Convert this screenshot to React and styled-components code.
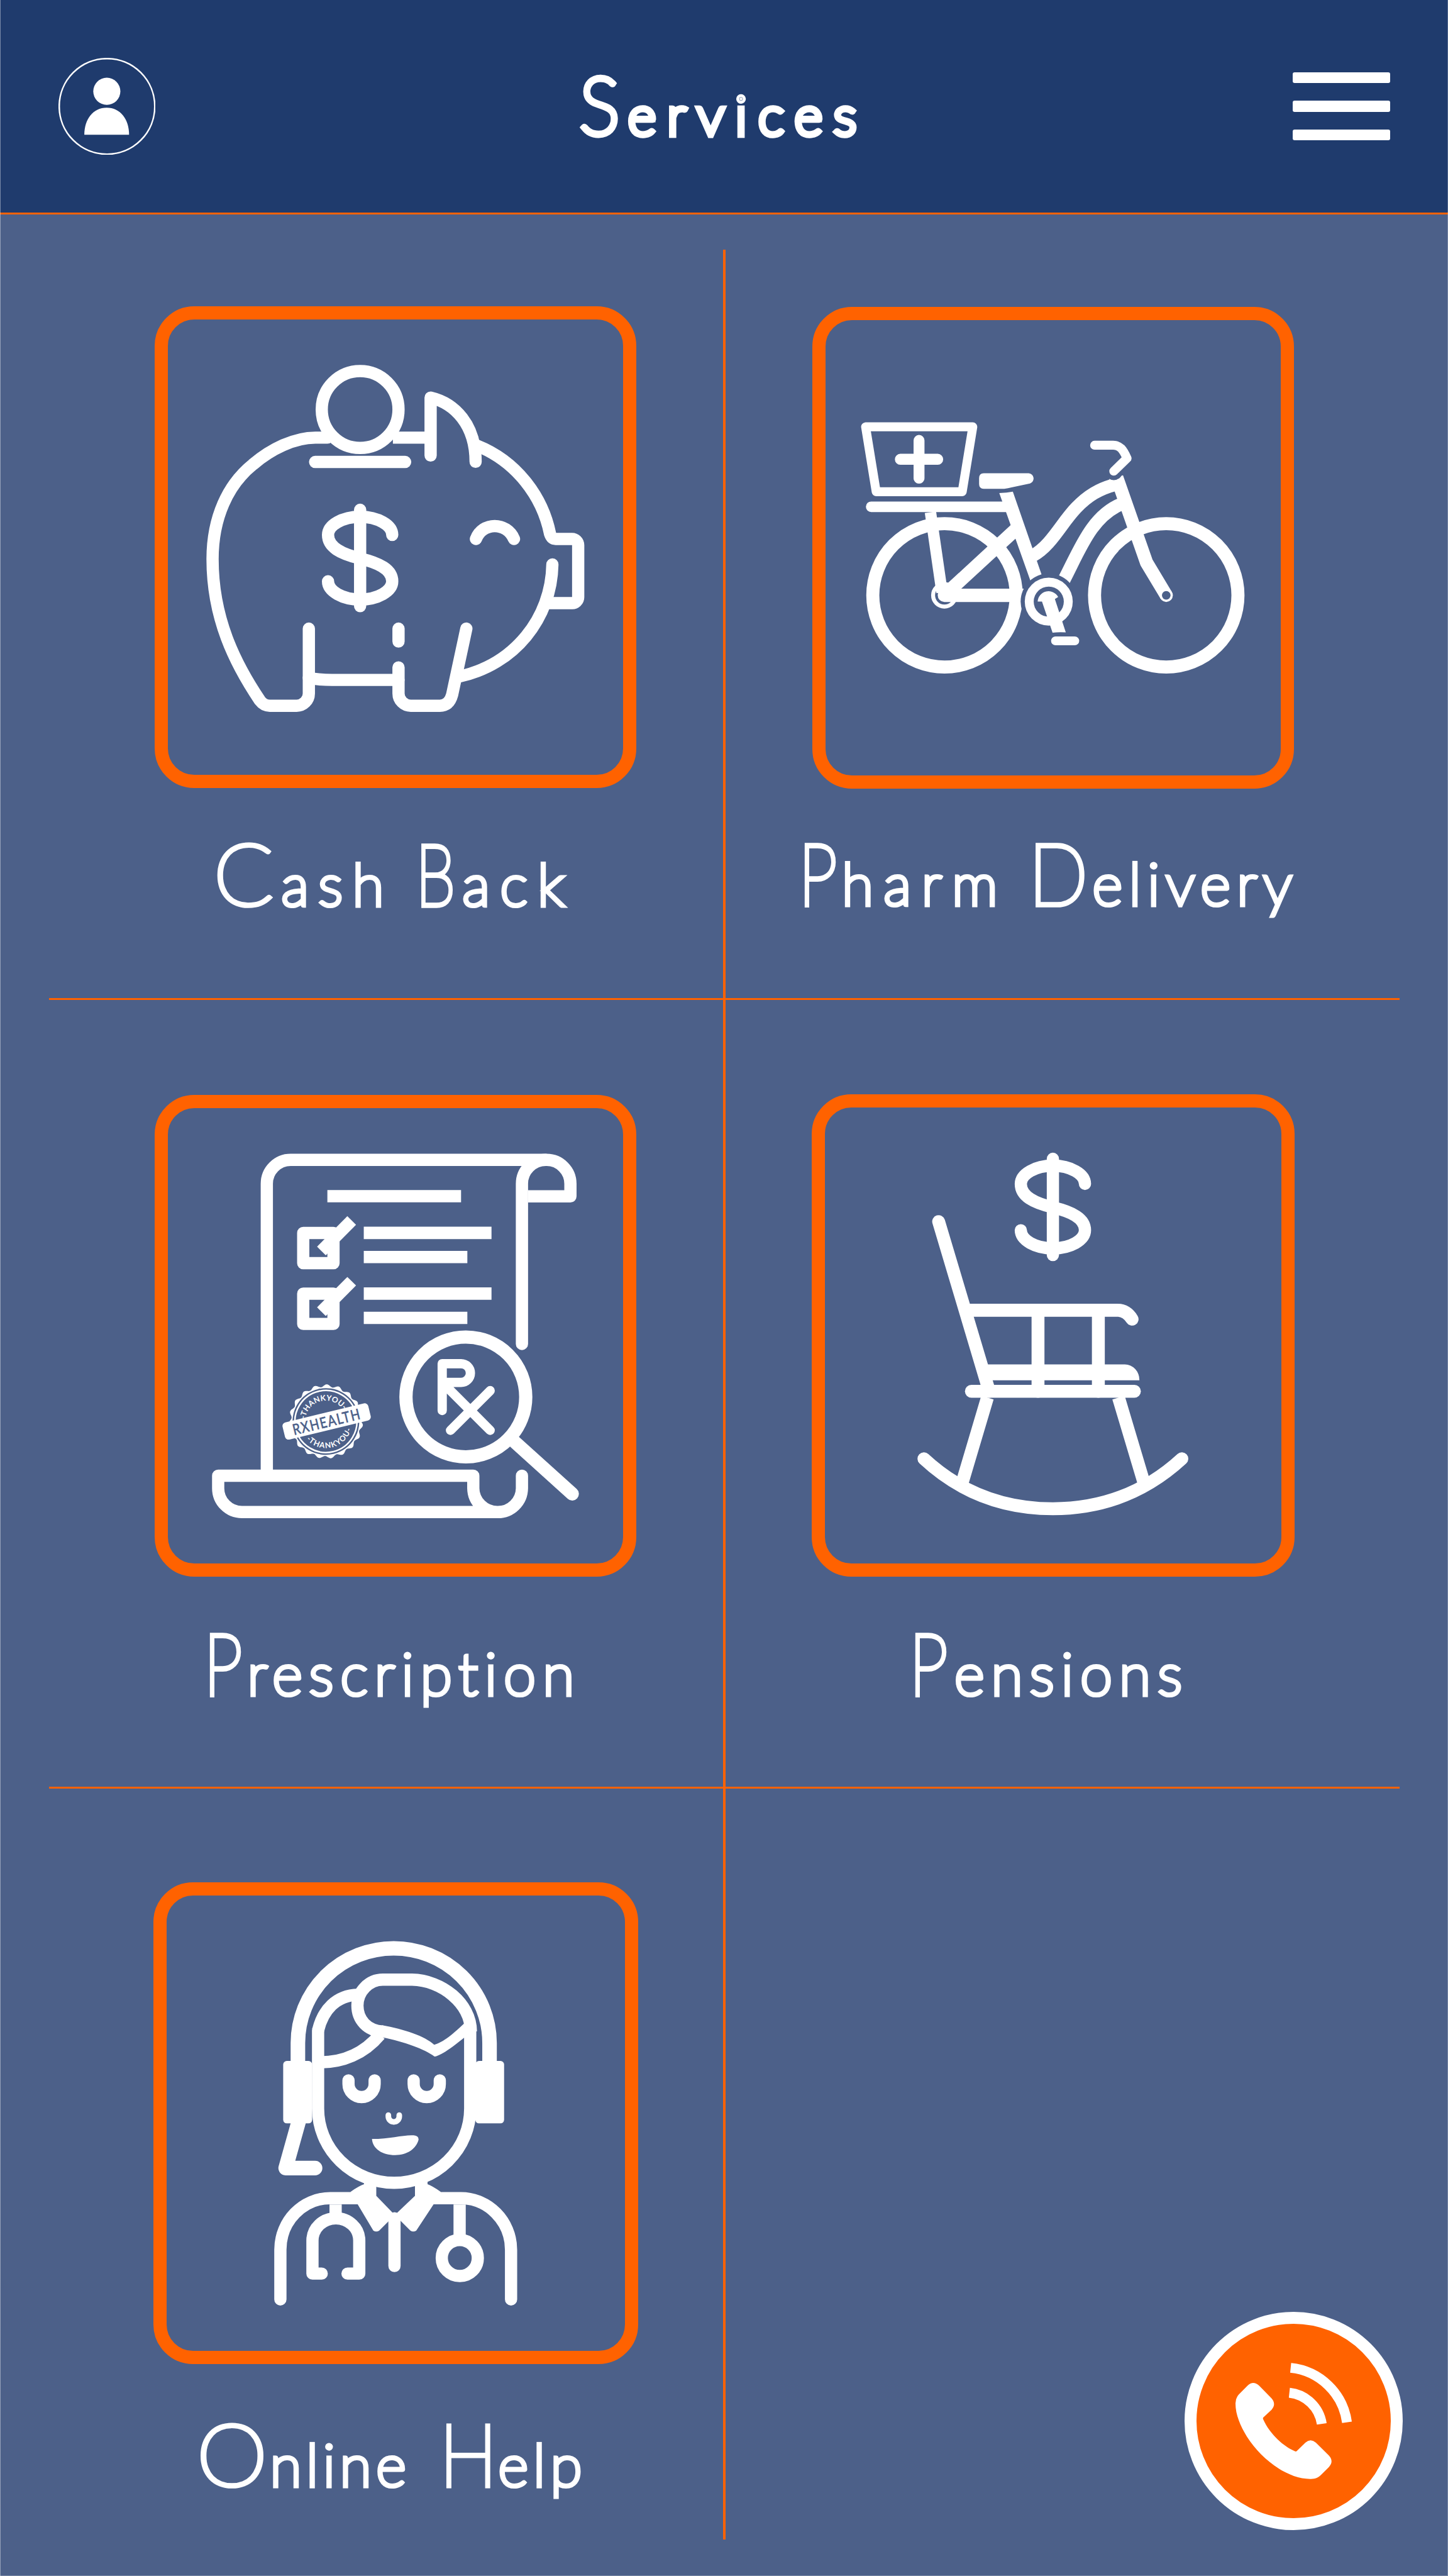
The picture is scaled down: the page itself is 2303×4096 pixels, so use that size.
import React from "react";
import styled, { createGlobalStyle } from "styled-components";

const NAVY = "#1f3b6d";
const SLATE = "#4c6089";
const ORANGE = "#ff6200";
const WHITE = "#ffffff";

const GlobalStyle = createGlobalStyle`
  * { box-sizing: border-box; }
  body {
    margin: 0;
    background: ${SLATE};
    color: ${WHITE};
    font-family: Lato, "Open Sans", sans-serif;
  }
`;

const Page = styled.div`
  position: relative;
  display: flex;
  flex-direction: column;
  width: 2303px;
  height: 4096px;
  overflow: hidden;
  background: ${SLATE};

  &::after {
    content: "";
    position: absolute;
    inset: 0;
    pointer-events: none;
    box-shadow: inset 1px 0 rgba(255, 255, 255, 0.4), inset -1px -1px rgba(255, 255, 255, 0.25);
  }
`;

/* ---------- Header ---------- */

const Header = styled.header`
  display: flex;
  flex: none;
  align-items: center;
  justify-content: space-between;
  height: 341px;
  padding: 0 92.5px;
  background: ${NAVY};
  border-bottom: 3.4px solid ${ORANGE};
`;

const IconButton = styled.button`
  display: flex;
  flex-direction: column;
  gap: 28.2px;
  width: 154.4px;
  padding: 0;
  border: 0;
  background: none;
  color: inherit;

  svg {
    display: block;
    width: 100%;
  }
`;

const Bar = styled.span`
  height: 17.2px;
  border-radius: 3px;
  background: ${WHITE};
`;

const Title = styled.h1`
  width: 460px;
  margin: -6px 0 0;
  font-size: 0;
  font-weight: 100;
  line-height: 1;
`;

/* ---------- Large-initial lettering ---------- */

const Word = styled.span`
  display: inline-block;
  width: ${(p) => (p.$width ? `${p.$width}px` : "auto")};
  font-size: ${(p) => p.$size || 92}px;
  letter-spacing: ${(p) => p.$spacing}px;
  white-space: nowrap;
  -webkit-text-stroke: ${(p) => p.$stroke || 7.2}px ${WHITE};
`;

const Initial = styled.span`
  display: inline-block;
  width: ${(p) => p.$width}px;
  font-size: ${(p) => p.$size || 136}px;
  letter-spacing: 0;
  transform: scaleX(${(p) => p.$stretch || 1.02});
  transform-origin: left;
`;

/* ---------- Services board ---------- */

const Board = styled.main`
  display: grid;
  flex: 1;
  grid-template-columns: 1150px 4px 1fr;
  grid-template-rows: 1246px 3px 1251px 3px 1fr;
`;

const ColumnRule = styled.div`
  grid-area: 1 / 2 / -1 / 3;
  margin: 56px 0 58px;
  background: ${ORANGE};
`;

const RowRule = styled.div`
  grid-area: ${(p) => p.$row} / 1 / auto / -1;
  margin: 0 77px 0 78px;
  background: ${ORANGE};
`;

const Service = styled.section`
  display: flex;
  flex-direction: column;
  grid-area: ${(p) => p.$row} / ${(p) => p.$column};
  padding-top: ${(p) => p.$top}px;
`;

const Frame = styled.div`
  flex: none;
  width: ${(p) => p.$width || 766.2}px;
  height: 766.7px;
  margin-left: ${(p) => p.$left}px;
  border: 21px solid ${ORANGE};
  border-radius: 63px;

  svg {
    display: block;
    width: 100%;
    height: 100%;
  }
`;

const Label = styled.h2`
  margin: ${(p) => p.$gap}px 0 0;
  padding-left: ${(p) => p.$left}px;
  font-size: 0;
  font-weight: 100;
  line-height: 1;
`;

const CallArea = styled.div`
  display: flex;
  grid-area: 5 / 3;
  align-items: flex-end;
  justify-content: flex-end;
  padding: 0 72.3px 73px 0;
`;

const CallButton = styled.button`
  width: 347px;
  height: 347px;
  padding: 0;
  border: 19.4px solid ${WHITE};
  border-radius: 50%;
  background: ${ORANGE};

  svg {
    display: block;
    width: 100%;
    height: 100%;
  }
`;

/* ---------- Drawings ---------- */

const line = (width, cap = "round") => ({
  fill: "none",
  stroke: WHITE,
  strokeWidth: width,
  strokeLinecap: cap,
  strokeLinejoin: "round",
});

const ProfileIcon = () => (
  <svg viewBox="0 0 154 154">
    <circle cx="77" cy="77" r="75.8" fill="none" stroke={WHITE} strokeWidth="2.5" />
    <circle cx="76.7" cy="53" r="21.5" fill={WHITE} />
    <path d="M41 122C41 97 55 79 76.5 79C98 79 112 97 112 122Z" fill={WHITE} />
  </svg>
);

const Dollar = ({ x = 0, y = 0 }) => (
  <g transform={`translate(${x} ${y})`} {...line(37)}>
    <path d="M669 672V963" />
    <path d="M766 748C766 718 722 693 669 693C616 693 572 718 572 748C572 785 610 805 669 819C728 833 766 853 766 888C766 918 722 943 669 943C616 943 572 918 572 888" />
  </g>
);

const PiggyIcon = () => (
  <svg viewBox="88 97 1376 1377">
    <g {...line(37)}>
      <circle cx="669" cy="369" r="116" />
      <path d="M570 454H534C470 454 400 488 345 535C270 595 223 695 223 821C223 1000 290 1135 366 1248Q378 1264 396 1264H477A37 37 0 0 0 514 1227V1031" />
      <path d="M768 454H882" strokeLinecap="butt" />
      <path d="M533 527.500H805" />
      <path d="M882 508V333C955 350 1018 415 1018 527" />
      <path d="M1022 478C1140 525 1220 630 1243 745Q1248 760 1260 760H1309A19 19 0 0 1 1328 779V936A18 18 0 0 1 1309 954H1235" />
      <path d="M1250 837C1247 1000 1135 1140 968 1176" />
      <path d="M990 1031L947 1231Q938 1264 910 1264H822A37 37 0 0 1 785 1227V1148" />
      <path d="M785 1031V1070" />
      <path d="M514 1180Q545 1186 584 1186H785" />
      <path d="M1019 760C1039 708 1112 708 1134 760" />
    </g>
    <Dollar />
  </svg>
);

const BikeIcon = () => (
  <svg viewBox="88 99 1374 1374">
    <g {...line(39.5)}>
      <circle cx="447.500" cy="929" r="216.700" />
      <circle cx="1117.500" cy="929" r="216.700" />
    </g>
    <circle cx="447" cy="929" r="34" fill={SLATE} stroke={WHITE} strokeWidth="12" />
    <g {...line(40)}>
      <path d="M690 929H447L665 728" />
      <path d="M716 808C770 778 800 712 845 665C880 628 915 607 965 594" strokeWidth="39" strokeLinecap="butt" />
      <path d="M795 908C850 810 885 690 985 652" strokeWidth="39" strokeLinecap="butt" />
      <path d="M968 573L1058 830L1117.500 929" strokeLinecap="butt" />
    </g>
    <path d="M405 678L440 920" {...line(34.5, "butt")} />
    <path d="M226 661.500H640" {...line(32)} />
    <path d="M613 620Q636 620 654 616L749 890L710 893Z" fill={WHITE} />
    <path d="M628 644H655V679H640Z" fill={WHITE} />
    <path d="M945 577L986 567L1000 620L962 612Z" fill={WHITE} />
    <circle cx="959" cy="554" r="27" fill={SLATE} />
    <circle cx="1117.500" cy="929" r="20" fill={WHITE} />
    <circle cx="1117.500" cy="929" r="13" fill={SLATE} />
    <path d="M901 475.500H957C978 476 987 488 999 515L959 554" {...line(27)} />
    <path d="M566 560H702A16 16 0 0 1 706 591L650 603Q640 606 628 607H566Q552 607 552 593V575Q552 560 566 560Z" fill={WHITE} />
    <path d="M209 420H533L501 616H241Z" {...line(27)} />
    <path d="M314 518H427M370.500 461V575" {...line(33)} />
    <circle cx="762.500" cy="948" r="85" fill={SLATE} />
    <circle cx="762.500" cy="948" r="59" {...line(27)} />
    <path d="M729 948A33 33 0 0 1 791 934L781 940L814 1041Q794 1039 774 1042L742 948Z" fill={WHITE} />
    <path d="M783 1066.500H841" {...line(27)} />
  </svg>
);

const scallop = (() => {
  const points = [];
  for (let i = 0; i < 360; i += 1) {
    const angle = (i * Math.PI) / 180;
    const radius = 232 + 8.5 * Math.cos(19 * (angle + 1.64));
    points.push(`${(radius * Math.cos(angle)).toFixed(1)} ${(radius * Math.sin(angle)).toFixed(1)}`);
  }
  return `M${points.join("L")}Z`;
})();

const Stamp = () => (
  <g transform="translate(392 882) scale(0.46667) translate(372 324) rotate(-13.6)">
    <path
      d={`${scallop}M216 0A216 216 0 1 0 -216 0A216 216 0 1 0 216 0Z`}
      fill={WHITE}
      fillRule="evenodd"
    />
    <circle r="201" fill="none" stroke={WHITE} strokeWidth="10" />
    <path id="stamp-top" d="M-135 0A135 135 0 0 1 135 0" fill="none" />
    <path id="stamp-bottom" d="M-172 0A172 172 0 0 0 172 0" fill="none" />
    <g fill={WHITE} fontFamily="Lato, sans-serif" fontWeight="700" fontSize="50" textAnchor="middle">
      <text letterSpacing="1">
        <textPath href="#stamp-top" startOffset="50%">-THANKYOU-</textPath>
      </text>
      <text letterSpacing="5">
        <textPath href="#stamp-bottom" startOffset="50%">-THANKYOU-</textPath>
      </text>
    </g>
    <rect x="-281" y="-56" width="571" height="114" rx="24" fill={WHITE} />
    <text
      x="-221"
      y="37"
      textLength="452"
      lengthAdjust="spacingAndGlyphs"
      fill={SLATE}
      stroke={SLATE}
      strokeWidth="3"
      fontFamily="Lato, sans-serif"
      fontWeight="400"
      fontSize="96"
      letterSpacing="9"
    >
      RXHEALTH
    </text>
  </g>
);

const CheckItem = ({ y }) => (
  <g transform={`translate(0 ${y})`}>
    <path d="M497 463.500H588.500V555H497Z" {...line(37)} />
    <path d="M643.500 426L552 518" {...line(37, "butt")} />
    <path d="M680 444.500H1066V482H680ZM680 518H993V555H680Z" fill={WHITE} />
  </g>
);

const PrescriptionIcon = () => (
  <svg viewBox="88 87 1376 1376">
    <g {...line(37)}>
      <path d="M387 1190V315A72 72 0 0 1 459 243H1233A72 72 0 0 1 1304.500 315V353H1176" strokeLinecap="butt" />
      <path d="M1158 799V315A72 72 0 0 1 1230 243" />
      <path d="M1158 1197V1235A73 73 0 0 1 1084 1307H312A72 72 0 0 1 240 1235V1197H1011V1235A73 73 0 0 0 1084 1307" />
    </g>
    <path d="M570 334H974V371H570Z" fill={WHITE} />
    <CheckItem y={0} />
    <CheckItem y={183.5} />
    <circle cx="988.500" cy="959" r="181" {...line(40)} />
    <path d="M1136 1095L1310 1252" {...line(40)} />
    <path d="M917 1000V858.500H974A28 28 0 0 1 974 915H917L1062 1060M1062 940L942 1060" {...line(28)} />
    <Stamp />
  </svg>
);

const RockingChairIcon = () => (
  <svg viewBox="86 85 1377 1378">
    <Dollar x={105.5} y={-432} />
    <g {...line(39)}>
      <path d="M429 430L582 943" />
      <path d="M576.500 962L500 1220M973 962L1050 1220" strokeLinecap="butt" />
      <path d="M515 698H970C990 698 1004 709 1014 725" />
      <path d="M729.500 698V943M912 698V943" />
      <path d="M528 943H1021" />
      <path d="M384.500 1147C490 1245 620 1298 774.500 1298C928 1298 1058 1245 1164.500 1147" />
    </g>
    <path d="M570 862H992A44 46 0 0 1 1036 910H585Z" fill={WHITE} />
  </svg>
);

const DoctorIcon = () => (
  <svg viewBox="83 85 1386 1376">
    <g {...line(37)}>
      <path d="M480 590V530A289.500 286 0 0 1 1059.500 530V590" strokeWidth="44" strokeLinecap="butt" />
      <path d="M541 492V728A230 224.500 0 0 0 1001 728V480" />
      <path d="M541 492C556 430 595 386 662 384" strokeLinecap="butt" />
      <path d="M541 588.500C615 590 680 562 728 505" strokeLinecap="butt" />
      <path
        d="M737 495C690 493 660 460 660 417C660 374 695 338.500 737 338.500H825C915 340 1003 410 1003 495"
        strokeLinecap="butt"
      />
      <path d="M633 643V654A39.500 39.500 0 0 0 712 654V643M830 643V654A39.500 39.500 0 0 0 909 654V643" />
      <path d="M753.500 748V752A16.500 16.500 0 0 0 786.500 752V748" strokeWidth="17" />
      <path d="M483 765L443 908H532" strokeWidth="44" />
      <path d="M427 1305V1155C427 1068 495 999 578 999H660M1124.500 1305V1155C1124.500 1068 1055 999 973 999H890" />
      <path d="M772 1060V1204" />
      <path d="M594 1018V1045M969 1018V1115" strokeLinecap="butt" />
      <path d="M552 1227H524V1127A70.500 67 0 0 1 665.500 1127V1227H630" />
      <circle cx="969.500" cy="1180" r="54.500" />
    </g>
    <g fill={WHITE}>
      <path d="M735 476C800 488 865 509 892 535C918 529 950 503 990 464L1003 497C960 533 915 568 893 571C865 549 800 526 735 513Z" />
      <rect x="435.500" y="584" width="87.500" height="189" rx="11" />
      <rect x="1016.500" y="584" width="87" height="189" rx="11" />
      <path d="M704 820C760 820 800 807 830 809Q846 811 845 822C838 850 810 869 774 869C735 869 706 850 704 820Z" />
      <path d="M639 980Q665 962 680 957V945H717V992L773 1050L726 1097Q717 1103 708 1097L661 1018Z" />
      <path d="M912 980Q886 962 872 957V945H834V992L773 1050L820 1097Q829 1103 838 1097L890 1018Z" />
    </g>
  </svg>
);

const CallIcon = () => (
  <svg viewBox="209 217 1046 1038">
    <path
      d="M485 545Q514 518 545 545L613 614Q640 645 613 676L570 716Q565 720 568 727C597 795 670 872 740 899Q745 902 750 897L795 853Q823 828 852 853L922 922Q950 953 922 984L882 1024C865 1042 850 1048 825 1048C700 1050 560 945 480 820C445 762 418 700 419 640Q420 610 438 592Z"
      fill={WHITE}
    />
    <path d="M716 450A341 341 0 0 1 1019 743" {...line(53, "butt")} />
    <path d="M709 584A198 198 0 0 1 883.500 751.500" {...line(53, "butt")} />
  </svg>
);

/* ---------- Screen ---------- */

export default function App() {
  return (
    <Page>
      <GlobalStyle />
      <Header>
        <IconButton aria-label="Profile">
          <ProfileIcon />
        </IconButton>
        <Title>
          <Word $size={85} $spacing={18.7} $stroke={10.5}>
            <Initial $size={126} $width={77.6} $stretch={0.95}>S</Initial>ervices
          </Word>
        </Title>
        <IconButton aria-label="Menu">
          <Bar />
          <Bar />
          <Bar />
        </IconButton>
      </Header>

      <Board>
        <ColumnRule />
        <RowRule $row={2} />
        <RowRule $row={4} />

        <Service $row={1} $column={1} $top={145.8}>
          <Frame $left={246.3}>
            <PiggyIcon />
          </Frame>
          <Label $left={340.1} $gap={66.5}>
            <Word $width={320.7} $spacing={15.4}>
              <Initial $width={107.5}>C</Initial>ash
            </Word>{" "}
            <Word $spacing={16.6}>
              <Initial $width={74.6} $stretch={0.75}>B</Initial>ack
            </Word>
          </Label>
        </Service>

        <Service $row={1} $column={3} $top={146.5}>
          <Frame $left={138.4} $width={765.2}>
            <BikeIcon />
          </Frame>
          <Label $left={115.7} $gap={65}>
            <Word $width={366.5} $spacing={16.6}>
              <Initial $width={69.3} $stretch={0.81}>P</Initial>harm
            </Word>{" "}
            <Word $spacing={10.5}>
              <Initial $width={101.4} $stretch={0.91}>D</Initial>elivery
            </Word>
          </Label>
        </Service>

        <Service $row={3} $column={1} $top={150.8}>
          <Frame $left={246.3}>
            <PrescriptionIcon />
          </Frame>
          <Label $left={324.2} $gap={67.8}>
            <Word $spacing={11.2}>
              <Initial $width={69.3} $stretch={0.81}>P</Initial>rescription
            </Word>
          </Label>
        </Service>

        <Service $row={3} $column={3} $top={150.3}>
          <Frame $left={137.4} $width={767.2}>
            <RockingChairIcon />
          </Frame>
          <Label $left={291.9} $gap={68.5}>
            <Word $spacing={11.3}>
              <Initial $width={72} $stretch={0.81}>P</Initial>ensions
            </Word>
          </Label>
        </Service>

        <Service $row={5} $column={1} $top={148.5}>
          <Frame $left={243.6} $width={771}>
            <DoctorIcon />
          </Frame>
          <Label $left={312.8} $gap={73.5}>
            <Word $width={386.2} $spacing={7.6}>
              <Initial $width={116.7} $stretch={1.05}>O</Initial>nline
            </Word>{" "}
            <Word $spacing={8.2}>
              <Initial $width={93.5} $stretch={0.9}>H</Initial>elp
            </Word>
          </Label>
        </Service>

        <CallArea>
          <CallButton aria-label="Call">
            <CallIcon />
          </CallButton>
        </CallArea>
      </Board>
    </Page>
  );
}
